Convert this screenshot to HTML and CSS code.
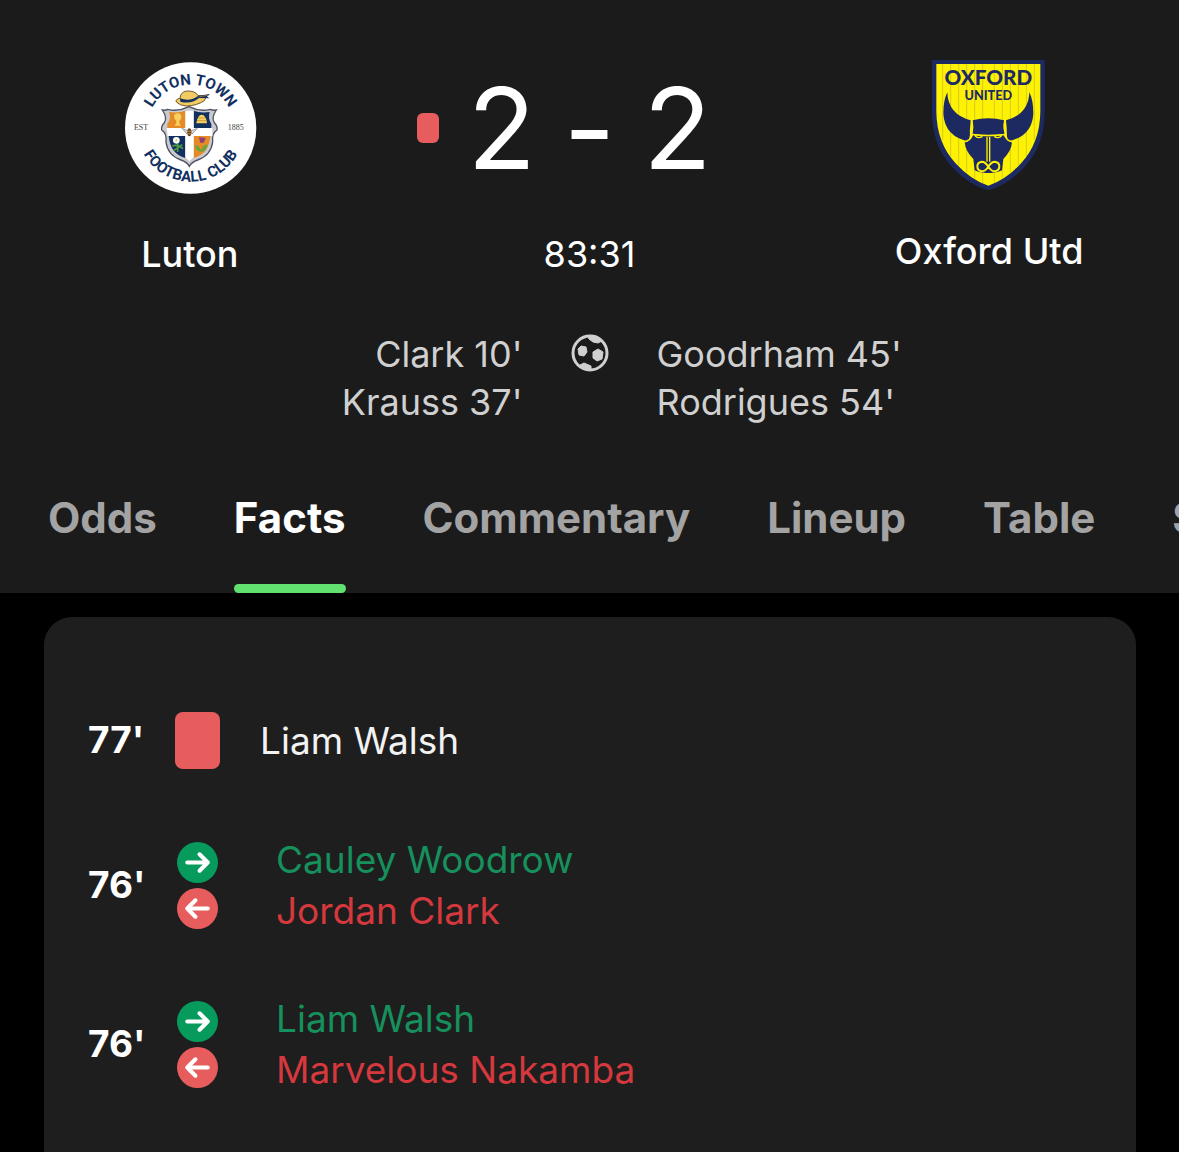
FILE: index.html
```
<!DOCTYPE html>
<html lang="en">
<head>
<meta charset="utf-8">
<meta name="viewport" content="width=device-width, initial-scale=1">
<title>Luton 2 - 2 Oxford Utd</title>
<link rel="stylesheet" href="styles.css">
</head>
<body>
<header class="match">
  <div class="scoreboard">
    <section class="team">
      <svg class="crest crest-luton" viewBox="24 30 402 402" role="img" aria-label="Luton Town crest">
        <defs>
          <path id="arc-top" d="M97 234A130 130 0 0 1 357 234"/>
          <path id="arc-bottom" d="M66 234A161 161 0 0 0 388 234"/>
        </defs>
        <circle cx="227" cy="234" r="197" fill="#fff"/>
        <text class="crest-arc"><textPath href="#arc-top" startOffset="50%">LUTON TOWN</textPath></text>
        <text class="crest-arc"><textPath href="#arc-bottom" startOffset="50%">FOOTBALL CLUB</textPath></text>
        <text class="crest-year" x="78" y="241">EST</text>
        <text class="crest-year" x="362" y="241">1885</text>
        <path d="M158 178Q190 186 222 170Q254 186 286 178Q294 182 304 180Q288 204 298 218Q308 228 306 240Q290 250 293 276Q288 316 248 330Q230 336 223 349Q216 336 198 330Q158 316 153 276Q156 250 140 240Q138 228 148 218Q158 204 142 180Q150 182 158 178Z" fill="#c9cbd0" stroke="#4d5160" stroke-width="4"/>
        <path d="M162 186Q190 190 211 182V234H157V222Q170 206 162 186Z" fill="#e58a25"/>
        <path d="M236 182Q256 190 284 186Q278 206 289 222V234H236Z" fill="#12305f"/>
        <path d="M161 258H211V324Q166 312 161 258Z" fill="#12305f"/>
        <path d="M236 258H286Q282 312 236 324Z" fill="#e58a25"/>
        <path d="M211 182H236V322L223 334L211 322ZM155 234H292V258H158Z" fill="#fff"/>
        <path d="M178 194Q188 186 198 194Q202 204 193 212V220L198 227H178L184 220V212Q175 204 178 194Z" fill="#f6d060"/>
        <path d="M244 220Q248 194 260 194Q273 194 276 220Z" fill="#f6d060"/>
        <path d="M246 212H274M249 204H271" stroke="#b68528" stroke-width="2"/>
        <path d="M172 288Q188 282 204 296M188 278V306M176 302L202 284" stroke="#4f9b45" stroke-width="5" fill="none"/>
        <circle cx="184" cy="271" r="10" fill="#fff"/><circle cx="184" cy="271" r="3" fill="#d8c14c"/>
        <path d="M240 286Q252 284 258 302Q264 282 278 284Q276 302 258 306Q242 304 240 286Z" fill="#6fa43c"/>
        <path d="M252 262L272 264L266 278L256 278Z" fill="#8d3d76"/>
        <path d="M201 235L221 243L216 252ZM247 235L226 243L231 252Z" fill="#d5dbe0" stroke="#79818a" stroke-width="2"/>
        <ellipse cx="223" cy="247" rx="6" ry="12" fill="#6d4322"/>
        <path d="M217 244H229M218 251H228" stroke="#e8aa31" stroke-width="2"/>
        <path d="M184 156Q194 167 214 168Q246 167 268 152Q276 143 268 138Q259 137 249 137Q242 122 214 123Q196 127 195 145Q180 148 184 156Z" fill="#f2cc62" stroke="#70592f" stroke-width="3"/>
        <path d="M195 145Q226 156 250 137L252 144Q228 164 196 155Z" fill="#12305f"/>
        <path d="M250 137L285 132L276 140L284 145L252 144Z" fill="#12305f"/>
        <path d="M254 140L278 136" stroke="#e58a25" stroke-width="2"/>
      </svg>
      <h2 class="team-name">Luton</h2>
    </section>
    <section class="result">
      <div class="score">
        <span class="card-mark card-small" role="img" aria-label="Red card"></span>
        <p class="goals"><span>2</span><span>-</span><span>2</span></p>
      </div>
      <p class="clock">83:31</p>
    </section>
    <section class="team">
      <svg class="crest crest-oxford" viewBox="43 45 360 393" role="img" aria-label="Oxford United crest">
        <path d="M52 45H390V200Q390 300 330 366Q280 420 221 436Q162 420 112 366Q52 300 52 200Z" fill="#1d2a62"/>
        <path d="M65 57H377V200Q376 294 318 356Q274 404 221 422Q168 404 124 356Q66 294 65 200Z" fill="#fdf104"/>
        <path d="M84 57V286M108 57V334M132 57V362M156 57V382M180 57V400M204 57V414M239 57V414M263 57V400M287 57V382M311 57V362M335 57V334M359 57V286" stroke="#c4b92a" stroke-width="2"/>
        <text class="crest-name" x="221" y="120">OXFORD</text>
        <text class="crest-united" x="221" y="164">UNITED</text>
        <path d="M98 142Q100 208 168 226Q164 260 166 290Q90 276 86 206Q86 166 98 142Z" fill="#1d2a62"/>
        <path d="M344 142Q342 208 274 226Q278 260 276 290Q352 276 356 206Q356 166 344 142Z" fill="#1d2a62"/>
        <path d="M174 226Q221 214 268 226Q264 250 270 266Q221 272 174 266Q178 244 174 226Z" fill="#1d2a62"/>
        <path d="M176 269Q221 278 266 269Q276 290 292 292Q290 318 266 342L262 376Q244 386 221 384Q198 386 180 376L176 342Q152 318 150 292Q168 290 176 269Z" fill="#1d2a62"/>
        <path d="M171 226Q177 250 164 284L150 291M271 226Q265 250 278 284L292 291M170 268Q221 276 272 268M180 271Q190 283 204 274M262 271Q252 283 238 274M217 276V350M225 276V350" fill="none" stroke="#fdf104" stroke-width="4"/>
        <path d="M221 365Q212 350 201 350Q188 352 188 364Q188 377 201 379Q212 379 221 365Q230 350 241 350Q254 352 254 364Q254 377 241 379Q230 379 221 365Z" fill="none" stroke="#fdf104" stroke-width="6"/>
      </svg>
      <h2 class="team-name">Oxford Utd</h2>
    </section>
  </div>

  <div class="scorers">
    <ul class="scorer-list scorer-home">
      <li>Clark 10'</li>
      <li>Krauss 37'</li>
    </ul>
    <svg class="ball" viewBox="0 0 38 38" role="img" aria-label="Goals">
      <circle cx="19" cy="19" r="17" fill="none" stroke="#d0d0d0" stroke-width="3"/>
      <path d="M7 15L10 12L15 13L16 18L13 22L8 21ZM22 18L27 15L32 18L31 25L26 27L22 24ZM17 2H25L31 7L27 9L22 8L18 5ZM9 31L13 29L20 32V36H14Z" fill="#d0d0d0" stroke="#d0d0d0" stroke-linejoin="round"/>
    </svg>
    <ul class="scorer-list">
      <li>Goodrham 45'</li>
      <li>Rodrigues 54'</li>
    </ul>
  </div>

  <nav class="tabs" aria-label="Match sections">
    <a class="tab" href="#odds">Odds</a>
    <a class="tab tab-active" href="#facts" aria-current="page">Facts</a>
    <a class="tab" href="#commentary">Commentary</a>
    <a class="tab" href="#lineup">Lineup</a>
    <a class="tab" href="#table">Table</a>
    <a class="tab" href="#stats">Stats</a>
  </nav>
</header>

<main class="facts" id="facts">
  <ol class="events">
    <li class="event">
      <span class="minute">77'</span>
      <span class="icons"><span class="card-mark card-large" role="img" aria-label="Red card"></span></span>
      <span class="players">Liam Walsh</span>
    </li>
    <li class="event event-sub">
      <span class="minute">76'</span>
      <span class="icons">
        <svg class="swap" viewBox="0 0 40 40" role="img" aria-label="In"><circle cx="20" cy="20" r="20" fill="#069a5d"/><path d="M10 20H30M22 12L30 20L22 28" class="arrow"/></svg>
        <svg class="swap" viewBox="0 0 40 40" role="img" aria-label="Out"><circle cx="20" cy="20" r="20" fill="#e75d5d"/><path d="M30 20H10M18 12L10 20L18 28" class="arrow"/></svg>
      </span>
      <span class="players"><span class="player-in">Cauley Woodrow</span><span class="player-out">Jordan Clark</span></span>
    </li>
    <li class="event event-sub">
      <span class="minute">76'</span>
      <span class="icons">
        <svg class="swap" viewBox="0 0 40 40" role="img" aria-label="In"><circle cx="20" cy="20" r="20" fill="#069a5d"/><path d="M10 20H30M22 12L30 20L22 28" class="arrow"/></svg>
        <svg class="swap" viewBox="0 0 40 40" role="img" aria-label="Out"><circle cx="20" cy="20" r="20" fill="#e75d5d"/><path d="M30 20H10M18 12L10 20L18 28" class="arrow"/></svg>
      </span>
      <span class="players"><span class="player-in">Liam Walsh</span><span class="player-out">Marvelous Nakamba</span></span>
    </li>
  </ol>
</main>
</body>
</html>
```
FILE: styles.css
```
* { box-sizing: border-box; margin: 0; padding: 0; }

body {
  display: flex;
  flex-direction: column;
  min-height: 100vh;
  background: #000;
  color: #fff;
  font-family: Inter, "Liberation Sans", sans-serif;
  font-size: 36px;
  line-height: 48px;
}

ul, ol { list-style: none; }

.match { background: #1b1b1b; padding-top: 60px; }

.scoreboard {
  display: grid;
  grid-template-columns: 1fr 1fr 1fr;
  column-gap: 20px;
}

.team, .result { display: flex; flex-direction: column; align-items: center; }
.team { gap: 36px; }
.crest { display: block; }
.crest-luton { width: 134px; height: 134px; }
.crest-oxford { width: 120px; height: 131px; }
.team-name { font-size: 36px; font-weight: 500; }

.crest-arc {
  font: bold 45px Roboto, sans-serif;
  fill: #12305f;
  text-anchor: middle;
}
.crest-year { font: 24px "Liberation Serif", serif; fill: #444; text-anchor: middle; }
.crest-name { font: 900 62px Lato, sans-serif; fill: #1d2a62; text-anchor: middle; }
.crest-united { font: 900 38px Lato, sans-serif; fill: #1d2a62; text-anchor: middle; }

.result { width: 100%; }
.score {
  display: grid;
  grid-template-columns: 1fr auto 1fr;
  align-items: center;
  column-gap: 28px;
  width: 100%;
  height: 136px;
  margin-bottom: 34px;
}
.goals { display: flex; gap: 28px; font-size: 112px; line-height: 136px; }

.card-mark { display: block; background: #e75d5d; }
.card-small { justify-self: end; width: 22px; height: 30px; border-radius: 6px; }
.card-large { width: 45px; height: 57px; border-radius: 8px; }

.scorers {
  display: grid;
  grid-template-columns: 1fr auto 1fr;
  column-gap: 48px;
  margin-top: 52px;
  color: #d0d0d0;
}
.scorer-home { text-align: right; }
.ball { width: 38px; height: 38px; margin-top: 4px; }

.tabs {
  display: flex;
  gap: 77px;
  margin-top: 56px;
  padding-left: 48px;
  overflow: hidden;
}
.tab {
  flex: none;
  height: 111px;
  padding-top: 12px;
  color: #a3a3a3;
  font-size: 42px;
  font-weight: 700;
  text-decoration: none;
}
.tab-active { position: relative; color: #fff; }
.tab-active::after {
  content: "";
  position: absolute;
  inset: auto 0 0;
  height: 9px;
  border-radius: 5px;
  background: #62e070;
}

.facts { display: flex; flex: 1; padding: 24px 43px 0 44px; }
.events {
  display: flex;
  flex: 1;
  flex-direction: column;
  gap: 57px;
  padding: 86px 44px 57px;
  border-radius: 28px 28px 0 0;
  background: #1e1e1e;
  font-size: 37px;
}
.event {
  display: grid;
  grid-template-columns: 87px 45px 1fr;
  align-items: center;
  min-height: 74px;
}
.minute { font-weight: 700; }
.icons { display: flex; flex-direction: column; align-items: center; gap: 5px; }
.swap { display: block; width: 41px; height: 41px; }
.arrow { fill: none; stroke: #fff; stroke-width: 4; stroke-linecap: round; stroke-linejoin: round; }
.players { padding-left: 40px; color: #f2f2f2; line-height: 51px; }
.event-sub .players { padding-left: 56px; }
.player-in, .player-out { display: block; }
.player-in { color: #16905c; }
.player-out { color: #d5383d; }
```
